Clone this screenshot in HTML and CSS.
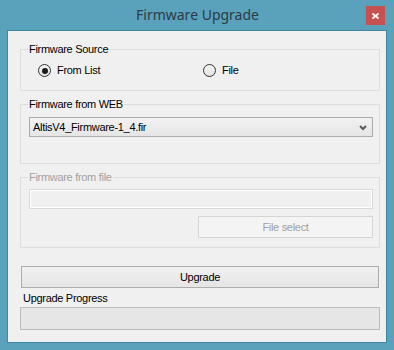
FILE: index.html
```html
<!DOCTYPE html>
<html>
<head>
<meta charset="utf-8">
<link rel="stylesheet" href="styles.css">
</head>
<body>
<div class="window">
  <div class="titlebar">
    <div class="tb-spacer"></div>
    <div class="title">Firmware Upgrade</div>
    <div class="tb-right">
      <div class="close-btn">
        <svg width="7" height="6" viewBox="0 0 7 6"><path d="M0.5 0.5 L6.5 5.5 M6.5 0.5 L0.5 5.5" stroke="#fff" stroke-width="1.8" fill="none"/></svg>
      </div>
    </div>
  </div>
  <div class="client">
    <div class="group group-source">
      <div class="group-title">Firmware Source</div>
      <div class="radio-row">
        <label class="radio radio-list"><span class="radio-circle checked"></span><span>From List</span></label>
        <label class="radio"><span class="radio-circle"></span><span>File</span></label>
      </div>
    </div>
    <div class="group group-web">
      <div class="group-title">Firmware from WEB</div>
      <div class="combo">
        <span class="combo-text">AltisV4_Firmware-1_4.fir</span>
        <svg class="chev" width="8" height="6" viewBox="0 0 8 6"><path d="M1 1 L4 4 L7 1" stroke="#5a5a5a" stroke-width="2" fill="none"/></svg>
      </div>
    </div>
    <div class="group group-file">
      <div class="group-title disabled">Firmware from file</div>
      <div class="textbox"></div>
      <div class="btn btn-disabled btn-file">File select</div>
    </div>
    <div class="btn btn-upgrade">Upgrade</div>
    <div class="progress-label">Upgrade Progress</div>
    <div class="progress"></div>
  </div>
</div>
</body>
</html>
```
FILE: styles.css
```css
* { box-sizing: border-box; }
html, body { margin: 0; padding: 0; }
body {
  font-family: "Liberation Sans", Arial, sans-serif;
  font-size: 11px;
  letter-spacing: -0.3px;
  color: #000;
}
.window {
  width: 394px;
  height: 350px;
  background: #5aa2bc;
  display: flex;
  flex-direction: column;
}
.titlebar {
  height: 30px;
  display: grid;
  grid-template-columns: 1fr auto 1fr;
  align-items: start;
}
.title {
  font-family: "Noto Sans", "Open Sans", sans-serif;
  font-size: 14px;
  letter-spacing: 0;
  color: #2c3b44;
  line-height: 20px;
  padding-top: 5px;
  padding-left: 1px;
}
.tb-right {
  display: flex;
  justify-content: flex-end;
  padding-right: 9px;
  padding-top: 6px;
}
.close-btn {
  width: 19px;
  height: 19px;
  background: #c75050;
  display: flex;
  align-items: center;
  justify-content: center;
}
.client {
  margin: 0 7px;
  height: 313px;
  border: 1px solid #3f86a1;
  background: #f0f0f0;
  display: flex;
  flex-direction: column;
  padding: 0 6px 0 12px;
}
.group {
  border: 1px solid #dcdcdc;
  display: flex;
  flex-direction: column;
  padding: 0 6px 0 8px;
}
.group-title {
  margin-top: -7px;
  margin-left: -1px;
  line-height: 13px;
  height: 13px;
  padding: 0 1px;
  background: #f0f0f0;
  align-self: flex-start;
}
.group-title.disabled { color: #a0a0a0; }
.group-source { margin-top: 18px; height: 42px; }
.group-web { margin-top: 13px; height: 60px; }
.group-file { margin-top: 13px; height: 71px; }

.radio-row {
  display: flex;
  margin-top: 8px;
  height: 13px;
  align-items: center;
  padding-left: 9px;
}
.radio {
  display: flex;
  align-items: center;
  gap: 6px;
  line-height: 13px;
}
.radio-list { width: 165px; }
.radio-circle {
  width: 13px;
  height: 13px;
  border-radius: 50%;
  border: 1px solid #333;
  background: linear-gradient(#f4f4f4, #e4e4e4);
  display: flex;
  align-items: center;
  justify-content: center;
}
.radio-circle.checked::after {
  content: "";
  width: 6px;
  height: 6px;
  border-radius: 50%;
  background: #1a1a1a;
}
.combo {
  margin-top: 6px;
  height: 20px;
  border: 1px solid #acacac;
  background: linear-gradient(#f2f2f2, #e5e5e5);
  display: flex;
  align-items: center;
  justify-content: space-between;
  padding: 0 3px 0 3px;
}
.combo-text { line-height: 13px; }
.chev { margin-right: 2px; margin-top: 1px; }
.textbox {
  margin-top: 5px;
  height: 20px;
  border: 1px solid #d9d9d9;
  box-shadow: inset 0 0 0 1px #fff;
  background: #f0f0f0;
}
.btn {
  height: 22px;
  border: 1px solid #adadad;
  background: linear-gradient(#f0f0f0, #e5e5e5);
  display: flex;
  align-items: center;
  justify-content: center;
  line-height: 13px;
}
.btn-disabled {
  border-color: #d5d5d5;
  background: #f4f4f4;
  color: #a0a0a0;
}
.btn-file {
  margin-top: 7px;
  width: 175px;
  align-self: flex-end;
}
.btn-upgrade {
  margin-top: 18px;
  margin-left: 1px;
  margin-right: 1px;
}
.progress-label {
  margin-top: 4px;
  margin-left: 3px;
  line-height: 13px;
}
.progress {
  margin-top: 2px;
  height: 23px;
  border: 1px solid #bcbcbc;
  background: #e6e6e6;
}
```
